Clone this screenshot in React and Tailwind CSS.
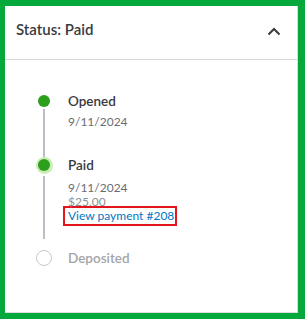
import React from "react";

const Dot = ({ state }) => {
  if (state === "done") {
    return <div className="w-[12px] h-[12px] rounded-full bg-[#2ca01c]" />;
  }
  if (state === "current") {
    return (
      <div className="w-[17px] h-[17px] rounded-full bg-[#c9edb4] flex items-center justify-center">
        <div className="w-[12px] h-[12px] rounded-full bg-[#2ca01c]" />
      </div>
    );
  }
  return <div className="w-[16px] h-[16px] rounded-full border-[1.5px] border-[#c6c8cc] bg-white" />;
};

const App = () => {
  return (
    <div
      className="w-[305px] h-[319px] bg-[#05a83a] pl-[5px] pt-[6px] pr-[7px] pb-[6px]"
      style={{ fontFamily: 'Lato, "Liberation Sans", sans-serif' }}
    >
      <div className="h-full bg-white border-r border-b border-[#d9dbde] flex flex-col">
        {/* Header */}
        <div className="h-[54px] border-b border-[#d4d7dc] flex justify-between pl-[11px] pr-[16px] pt-[13px]">
          <div className="text-[15px] leading-[20px] font-semibold text-[#393a3d]">Status: Paid</div>
          <svg width="14" height="9" viewBox="0 0 14 9" className="mt-[8px]">
            <path d="M1.5 7.5 L7 2 L12.5 7.5" fill="none" stroke="#393a3d" strokeWidth="2" />
          </svg>
        </div>

        {/* Timeline */}
        <div className="pl-[27px] pt-[31px] flex flex-col">
          {/* Opened */}
          <div className="flex gap-[12px]">
            <div className="w-[24px] flex flex-col items-center">
              <div className="h-[20px] flex items-center">
                <Dot state="done" />
              </div>
              <div className="w-[2px] flex-1 bg-[#babec5] mt-[-2px] mb-[-4px]" />
            </div>
            <div className="pb-[25px]">
              <div className="text-[13.5px] leading-[20px] font-semibold text-[#393a3d]">Opened</div>
              <div className="text-[12px] leading-[17px] mt-[2px] text-[#6b6c72]">9/11/2024</div>
            </div>
          </div>

          {/* Paid */}
          <div className="flex gap-[12px]">
            <div className="w-[24px] flex flex-col items-center">
              <div className="h-[20px] flex items-center">
                <Dot state="current" />
              </div>
              <div className="w-[2px] flex-1 bg-[#babec5] mt-[1px] mb-[9px]" />
            </div>
            <div className="pb-[22px]">
              <div className="text-[13.5px] leading-[20px] font-semibold text-[#393a3d]">Paid</div>
              <div className="mt-[6px] text-[12px] leading-[14px] text-[#6b6c72]">
                <div>9/11/2024</div>
                <div className="text-[#8d9096]">$25.00</div>
              </div>
              <div className="-ml-[5px] mt-[-3px] w-[114px] h-[20px] border-2 border-[#e3141b] pl-[3px] flex items-center">
                <span className="text-[12px] leading-[14px] whitespace-nowrap text-[#0077c5]">View payment #208</span>
              </div>
            </div>
          </div>

          {/* Deposited */}
          <div className="flex gap-[12px]">
            <div className="w-[24px] flex flex-col items-center">
              <div className="h-[20px] flex items-center">
                <Dot state="todo" />
              </div>
            </div>
            <div className="text-[13.5px] leading-[20px] font-semibold text-[#a3a5aa]">Deposited</div>
          </div>
        </div>
      </div>
    </div>
  );
};

export default App;
